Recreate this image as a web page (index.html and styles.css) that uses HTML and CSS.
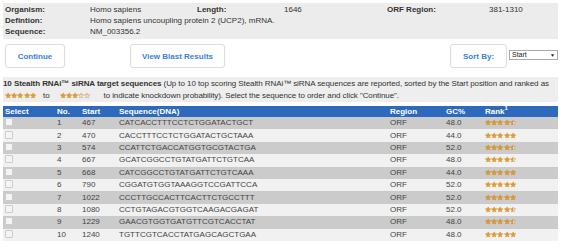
FILE: index.html
```html
<!DOCTYPE html>
<html lang="en">
<head>
  <meta charset="UTF-8">
  <title>Stealth RNAi siRNA results</title>
  <link rel="stylesheet" href="styles.css">
</head>
<body>

  <!-- gene info -->
  <div class="info">
    <span class="lbl">Organism:</span><span>Homo sapiens</span><span class="lbl">Length:</span><span>1646</span><span class="lbl">ORF Region:</span><span>381-1310</span>
    <span class="lbl">Defintion:</span><span class="wide">Homo sapiens uncoupling protein 2 (UCP2), mRNA.</span>
    <span class="lbl">Sequence:</span><span class="wide">NM_003356.2</span>
  </div>

  <div class="actions">
    <button class="btn btn-continue">Continue</button>
    <button class="btn btn-blast">View Blast Results</button>
    <div class="spacer"></div>
    <button class="btn btn-sort">Sort By:</button>
    <div class="sort-wrap">
      <select class="sort"><option>Start</option></select>
      <span class="arrow">▼</span>
    </div>
  </div>

  <div class="intro">
    <b>10 Stealth RNAi&trade; siRNA target sequences</b> (Up to 10 top scoring Stealth RNAi&trade; siRNA sequences are reported, sorted by the Start position and ranked as<br>
    <span class="stars s-best" style="--fill: 100%">★★★★★</span>to<span class="stars s-low" style="--fill: 60%">★★★★★</span>to indicate knockdown probability). Select the sequence to order and click "Continue".
  </div>

  <table class="seqs">
    <thead>
      <tr><th class="c-sel">Select</th><th class="c-no">No.</th><th class="c-start">Start</th><th>Sequence(DNA)</th><th class="c-reg">Region</th><th class="c-gc">GC%</th><th class="c-rank">Rank<sup>1</sup></th></tr>
    </thead>
    <tbody id="rows"></tbody>
  </table>

  <script>
    const data = [
      [1, 467, "CATCACCTTTCCTCTGGATACTGCT", "48.0", 90],
      [2, 470, "CACCTTTCCTCTGGATACTGCTAAA", "44.0", 100],
      [3, 574, "CCATTCTGACCATGGTGCGTACTGA", "52.0", 90],
      [4, 667, "GCATCGGCCTGTATGATTCTGTCAA", "48.0", 90],
      [5, 668, "CATCGGCCTGTATGATTCTGTCAAA", "44.0", 100],
      [6, 790, "CGGATGTGGTAAAGGTCCGATTCCA", "52.0", 100],
      [7, 1022, "CCCTTGCCACTTCACTTCTGCCTTT", "52.0", 100],
      [8, 1080, "CCTGTAGACGTGGTCAAGACGAGAT", "52.0", 90],
      [9, 1229, "GAACGTGGTGATGTTCGTCACCTAT", "48.0", 90],
      [10, 1240, "TGTTCGTCACCTATGAGCAGCTGAA", "48.0", 100]
    ];
    const tbody = document.getElementById("rows");
    for (const [no, start, seq, gc, fill] of data) {
      const tr = document.createElement("tr");
      tr.innerHTML =
        '<td class="c-sel"><span class="box"></span></td>' +
        '<td class="c-no">' + no + '</td>' +
        '<td class="c-start">' + start + '</td>' +
        '<td>' + seq + '</td>' +
        '<td class="c-reg">ORF</td>' +
        '<td class="c-gc">' + gc + '</td>' +
        '<td class="c-rank"><span class="stars" style="--fill: ' + fill + '%">★★★★★</span></td>';
      tbody.appendChild(tr);
    }
  </script>

</body>
</html>
```

FILE: styles.css
```css
body { margin: 0; padding: 3px 7px 0 3px; font-family: "Liberation Sans", Arial, sans-serif; font-size: 8px; color: #333; background: #fff; }

.info { display: grid; grid-template-columns: 85px 107px 87px 103px 102px 1fr; background: #ececec; padding: 1px 2px 2px; line-height: 11px; }
.info .lbl { font-weight: bold; }
.info .wide { grid-column: 2 / span 5; }

.actions { display: flex; align-items: center; margin-top: 5px; height: 24px; }
.btn { height: 24px; padding: 0; background: #fff; border: 1px solid #ddd; border-radius: 3px; color: #3b7fd6; font-family: "Liberation Sans", Arial, sans-serif; font-size: 8px; font-weight: bold; }
.btn-continue { margin-left: 2px; width: 60px; }
.btn-blast { margin-left: 65px; width: 95px; }
.btn-sort { width: 57px; }
.spacer { flex: 1; }
.sort-wrap { position: relative; margin-left: 2px; align-self: flex-start; margin-top: 6px; }
.sort { display: block; -webkit-appearance: none; appearance: none; width: 49px; height: 10px; padding: 0 0 0 2px; font-size: 7px; line-height: 8px; color: #222; font-family: "Liberation Sans", Arial, sans-serif; border: 1px solid #aaa; border-radius: 0; background: #fff; }
.arrow { position: absolute; right: 3px; top: 2px; font-size: 5px; line-height: 6px; color: #222; pointer-events: none; }

.intro { margin-top: 9px; background: #eeeeee; padding: 1px 0 1px; line-height: 11.5px; letter-spacing: -0.08px; white-space: nowrap; overflow: hidden; }
.stars { font-size: 7px; letter-spacing: 0.2px; background: linear-gradient(90deg, #ec9b1e var(--fill), #e6e2d6 var(--fill)); -webkit-background-clip: text; background-clip: text; color: transparent; -webkit-text-stroke: 0.2px #b36a00; }
.intro .s-best { margin: 0 7px 0 2px; }
.intro .s-low { margin: 0 13px 0 10px; }

.seqs { width: 100%; border-collapse: collapse; margin-top: 4px; }
.seqs th { background: #2d69bc; color: #fff; font-weight: bold; text-align: left; height: 11px; padding: 0 2px; line-height: 11px; }
.seqs sup { font-size: 6px; vertical-align: 4px; line-height: 0; }
.seqs td { height: 12.4px; padding: 0 2px; line-height: 12px; color: #444; }
.seqs tbody tr:nth-child(odd) td { background: #cbcbcb; }
.seqs tbody tr:nth-child(even) td { background: #f1f1f1; }
.c-sel { width: 48px; }
.c-no { width: 21px; }
.c-start { width: 33px; }
.c-reg { width: 52px; }
.c-gc { width: 35px; }
.c-rank { width: 71px; }
.box { display: inline-block; box-sizing: border-box; width: 8px; height: 8px; border: 1px solid #ccc; border-radius: 1px; background: #f4f4f4; vertical-align: -1px; }
```
